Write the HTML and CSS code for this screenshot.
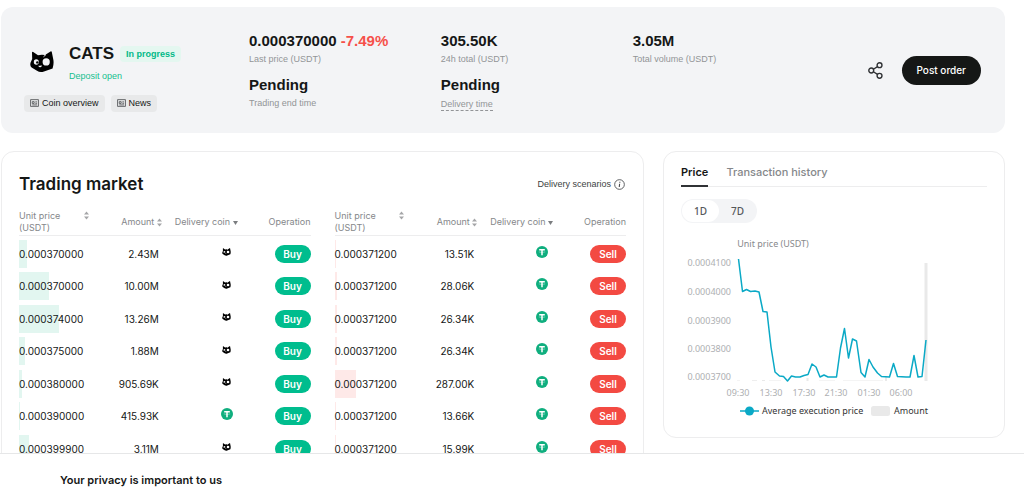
FILE: index.html
```html
<!DOCTYPE html>
<html lang="en">
<head>
<meta charset="utf-8">
<meta name="viewport" content="width=device-width, initial-scale=1">
<title>CATS pre-market trading</title>
<link rel="stylesheet" href="styles.css">
</head>
<body>
<svg class="sprite" aria-hidden="true">
  <symbol id="cat" viewBox="0 0 24 22"><path fill="#000" fill-rule="evenodd" d="M2 1.200Q2.300.4 3.200.9L8 4.200Q11.500 3.200 15 4L20.500.4Q21.600 0 21.800 1L23.400 9Q24 13 22.600 17.500L14 20.500Q10 21.800 7 19.800L1.600 16.600Q-.4 15 .6 11.500L2.200 8ZM16.200 7.300A3.600 3.600 0 1 0 16.200 14.500A3.600 3.600 0 1 0 16.200 7.300ZM6.300 8.300A2.500 2.700 0 1 0 6.300 13.700A2.500 2.700 0 1 0 6.300 8.300ZM8.300 14.700Q9 16.800 10.900 16.100Q12 15.500 11.500 14.300L10.200 14.800Z"/><circle cx="7.300" cy="11.400" r="1.200"/><path d="M13.500 5.800L16 3.500" stroke="#f3f4f6" stroke-width="1"/></symbol>
  <symbol id="tether" viewBox="0 0 12 12"><circle cx="6" cy="6" r="6" fill="#0fae7e"/><path d="M3.200 3.700H8.800M6 3.700V9.300" stroke="#fff" stroke-width="1.500" fill="none"/><path d="M2.800 5.900Q6 7 9.200 5.900" fill="none" stroke="#fff" stroke-width=".4"/></symbol>
  <symbol id="sort" viewBox="0 0 5 9"><path d="M0 3.500L2.500.5L5 3.500ZM0 5.500L2.500 8.500L5 5.500Z" fill="#a5a6a8"/></symbol>
  <symbol id="caret" viewBox="0 0 5 4"><path d="M0 0H5L2.500 4Z" fill="#7b7d80"/></symbol>
  <symbol id="doc" viewBox="0 0 8 7"><path d="M.5.500H7.500V6.500H.5ZM2 2.300H3.700V3.900H2ZM4.700 2.500H6.300M4.700 3.800H6.300M2 5.200H6.300" fill="none" stroke="#45474a" stroke-width=".7"/></symbol>
</svg>
<div class="page">
  <header class="summary">
    <div class="identity">
      <div class="coin">
        <svg class="coin-logo"><use href="#cat"/></svg>
        <div>
          <div class="coin-row"><h1 class="coin-name">CATS</h1><span class="badge">In progress</span></div>
          <p class="deposit">Deposit open</p>
        </div>
      </div>
      <nav class="links">
        <a class="chip" href="#overview"><svg class="doc"><use href="#doc"/></svg>Coin overview</a>
        <a class="chip" href="#news"><svg class="doc"><use href="#doc"/></svg>News</a>
      </nav>
    </div>
    <dl class="stats">
      <div class="stat"><dd class="value">0.000370000 <span class="down">-7.49%</span></dd><dt class="label">Last price (USDT)</dt></div>
      <div class="stat"><dd class="value">305.50K</dd><dt class="label">24h total (USDT)</dt></div>
      <div class="stat"><dd class="value">3.05M</dd><dt class="label">Total volume (USDT)</dt></div>
      <div class="stat"><dd class="value">Pending</dd><dt class="label">Trading end time</dt></div>
      <div class="stat"><dd class="value">Pending</dd><dt class="label"><span class="hint">Delivery time</span></dt></div>
    </dl>
    <div class="actions">
      <button class="share" type="button" aria-label="Share"><svg class="share-icon" viewBox="0 0 14 16" fill="none" stroke="#303235" stroke-width="1.300"><circle cx="3" cy="8" r="2.300"/><circle cx="10.800" cy="3" r="2.300"/><circle cx="10.800" cy="13" r="2.300"/><path d="M5 6.800L8.900 4.300M5 9.200L8.900 11.700"/></svg></button>
      <button class="post" type="button">Post order</button>
    </div>
  </header>
  <main class="main">
    <section class="card market">
      <div class="market-head">
        <h2 class="market-title">Trading market</h2>
        <button class="scenarios" type="button">Delivery scenarios <svg class="info" viewBox="0 0 10 10" fill="none" stroke="#4a4c50"><circle cx="5" cy="5" r="4.400" stroke-width=".8"/><path d="M5.300 2.500V3.400M5.100 4.300L4.800 7.300" stroke-width="1"/></svg></button>
      </div>
      <div class="books">
        <table class="book">
          <thead><tr>
            <th class="c-price"><div class="price-head"><span>Unit price (USDT)</span><svg class="sort"><use href="#sort"/></svg></div></th>
            <th class="c-amount">Amount <svg class="sort"><use href="#sort"/></svg></th>
            <th class="c-coin">Delivery coin <svg class="caret"><use href="#caret"/></svg></th>
            <th class="c-op">Operation</th>
          </tr></thead>
          <tbody>
            <tr><td><div class="price buy-depth"><i class="bar" style="width:11%"></i><span>0.000370000</span></div></td><td class="amount">2.43M</td><td class="asset"><svg class="cat"><use href="#cat"/></svg></td><td class="op"><button class="trade buy" type="button">Buy</button></td></tr>
            <tr><td><div class="price buy-depth"><i class="bar" style="width:41%"></i><span>0.000370000</span></div></td><td class="amount">10.00M</td><td class="asset"><svg class="cat"><use href="#cat"/></svg></td><td class="op"><button class="trade buy" type="button">Buy</button></td></tr>
            <tr><td><div class="price buy-depth"><i class="bar" style="width:55%"></i><span>0.000374000</span></div></td><td class="amount">13.26M</td><td class="asset"><svg class="cat"><use href="#cat"/></svg></td><td class="op"><button class="trade buy" type="button">Buy</button></td></tr>
            <tr><td><div class="price buy-depth"><i class="bar" style="width:8%"></i><span>0.000375000</span></div></td><td class="amount">1.88M</td><td class="asset"><svg class="cat"><use href="#cat"/></svg></td><td class="op"><button class="trade buy" type="button">Buy</button></td></tr>
            <tr><td><div class="price buy-depth"><i class="bar" style="width:4%"></i><span>0.000380000</span></div></td><td class="amount">905.69K</td><td class="asset"><svg class="cat"><use href="#cat"/></svg></td><td class="op"><button class="trade buy" type="button">Buy</button></td></tr>
            <tr><td><div class="price buy-depth"><i class="bar" style="width:2%"></i><span>0.000390000</span></div></td><td class="amount">415.93K</td><td class="asset"><svg class="tether"><use href="#tether"/></svg></td><td class="op"><button class="trade buy" type="button">Buy</button></td></tr>
            <tr><td><div class="price buy-depth"><i class="bar" style="width:14%"></i><span>0.000399900</span></div></td><td class="amount">3.11M</td><td class="asset"><svg class="cat"><use href="#cat"/></svg></td><td class="op"><button class="trade buy" type="button">Buy</button></td></tr>
          </tbody>
        </table>
        <table class="book">
          <thead><tr>
            <th class="c-price"><div class="price-head"><span>Unit price (USDT)</span><svg class="sort"><use href="#sort"/></svg></div></th>
            <th class="c-amount">Amount <svg class="sort"><use href="#sort"/></svg></th>
            <th class="c-coin">Delivery coin <svg class="caret"><use href="#caret"/></svg></th>
            <th class="c-op">Operation</th>
          </tr></thead>
          <tbody>
            <tr><td><div class="price sell-depth"><i class="bar" style="width:2%"></i><span>0.000371200</span></div></td><td class="amount">13.51K</td><td class="asset"><svg class="tether"><use href="#tether"/></svg></td><td class="op"><button class="trade sell" type="button">Sell</button></td></tr>
            <tr><td><div class="price sell-depth"><i class="bar" style="width:3%"></i><span>0.000371200</span></div></td><td class="amount">28.06K</td><td class="asset"><svg class="tether"><use href="#tether"/></svg></td><td class="op"><button class="trade sell" type="button">Sell</button></td></tr>
            <tr><td><div class="price sell-depth"><i class="bar" style="width:3%"></i><span>0.000371200</span></div></td><td class="amount">26.34K</td><td class="asset"><svg class="tether"><use href="#tether"/></svg></td><td class="op"><button class="trade sell" type="button">Sell</button></td></tr>
            <tr><td><div class="price sell-depth"><i class="bar" style="width:3%"></i><span>0.000371200</span></div></td><td class="amount">26.34K</td><td class="asset"><svg class="tether"><use href="#tether"/></svg></td><td class="op"><button class="trade sell" type="button">Sell</button></td></tr>
            <tr><td><div class="price sell-depth"><i class="bar" style="width:30%"></i><span>0.000371200</span></div></td><td class="amount">287.00K</td><td class="asset"><svg class="tether"><use href="#tether"/></svg></td><td class="op"><button class="trade sell" type="button">Sell</button></td></tr>
            <tr><td><div class="price sell-depth"><i class="bar" style="width:2%"></i><span>0.000371200</span></div></td><td class="amount">13.66K</td><td class="asset"><svg class="tether"><use href="#tether"/></svg></td><td class="op"><button class="trade sell" type="button">Sell</button></td></tr>
            <tr><td><div class="price sell-depth"><i class="bar" style="width:2%"></i><span>0.000371200</span></div></td><td class="amount">15.99K</td><td class="asset"><svg class="tether"><use href="#tether"/></svg></td><td class="op"><button class="trade sell" type="button">Sell</button></td></tr>
          </tbody>
        </table>
      </div>
    </section>
    <section class="card history">
      <div class="tabs" role="tablist">
        <button class="tab tab-on" type="button" role="tab" aria-selected="true">Price</button>
        <button class="tab" type="button" role="tab" aria-selected="false">Transaction history</button>
      </div>
      <div class="range">
        <button class="period period-on" type="button">1D</button>
        <button class="period" type="button">7D</button>
      </div>
      <svg class="chart" viewBox="0 0 306 192" role="img" aria-label="Unit price (USDT)">
        <text class="chart-title" x="92" y="14" text-anchor="middle">Unit price (USDT)</text>
        <g class="axis" text-anchor="end">
          <text x="50" y="33">0.0004100</text><text x="50" y="62">0.0004000</text><text x="50" y="91">0.0003900</text><text x="50" y="119">0.0003800</text><text x="50" y="147">0.0003700</text>
        </g>
        <g class="axis" text-anchor="middle">
          <text x="57" y="163">09:30</text><text x="90" y="163">13:30</text><text x="123" y="163">17:30</text><text x="155" y="163">21:30</text><text x="188" y="163">01:30</text><text x="220" y="163">06:00</text>
        </g>
        <path fill="#e9e9e9" d="M243.500 30H246.500V148H243.500ZM125.500 145H127.500V148H125.500ZM204 144H206V148H204ZM56 147.500H59V148H56ZM71 147.300H76V148H71ZM81 147H84V148H81ZM88 147.500H100V148H88ZM138 147.500H154V148H138ZM162 147.500H202V148H162Z"/>
        <path class="line" d="M57.500 26L61.500 58.500L65.500 56.500L69.500 58.500L74 58L78 59L82 78.500L86 79L90 114L94 139L98.500 143L102.500 143.500L106.500 148L110.500 143L114.500 144L119 144L123 142.500L127 141.500L131 131L135 134L139 144L143 142L147 144L155.500 144L159.500 115L163.500 95.500L167.500 125L171.500 106L175.500 108L180 139.500L184 144L188 126.500L192 134L196.500 140L200.500 143.500L208.500 144L212.500 130.500L216.500 143.500L225 144L229 144L233 122.500L237 144L241 143.500L245 107"/>
        <path class="line" d="M59 178H78"/><circle cx="68.500" cy="178" r="4.500" fill="#0aa9c6"/>
        <text class="legend" x="81" y="181">Average execution price</text>
        <rect x="190" y="173" width="19" height="10" rx="2.500" fill="#e9e9e9"/>
        <text class="legend" x="213" y="181">Amount</text>
      </svg>
    </section>
  </main>
  <aside class="privacy"><h2 class="privacy-title">Your privacy is important to us</h2></aside>
</div>
</body>
</html>
```
FILE: styles.css
```css
* { box-sizing: border-box; }
body { margin: 0; background: #fff; color: #151716; font-family: Inter, "Liberation Sans", sans-serif; font-size: 9px; line-height: 12px; }
h1, h2, p, dl, dd { margin: 0; }
button { margin: 0; padding: 0; border: 0; background: none; color: inherit; font: inherit; cursor: pointer; }
a { color: inherit; text-decoration: none; }
.sprite { display: none; }
.page { height: 100vh; overflow: hidden; padding: 7px 19px 0 1px; }

.summary { display: flex; align-items: center; height: 126px; padding: 0 24px 0 23px; border-radius: 12px; background: #f3f4f6; font-family: "Liberation Sans", sans-serif; }
.identity { flex: 0 0 225px; padding-top: 14px; }
.coin { display: flex; align-items: center; gap: 15px; padding-left: 6px; }
.coin-logo { width: 24px; height: 22px; }
.coin-row { display: flex; align-items: center; gap: 6px; }
.coin-name { font-size: 17px; line-height: 24px; font-weight: 700; }
.badge { padding: 2px 6px; border-radius: 4px; background: #e4f7f0; color: #00b987; font-weight: 700; }
.deposit { margin-top: 4px; color: #16bf90; }
.links { display: flex; gap: 6px; margin-top: 13px; }
.chip { display: flex; align-items: center; gap: 3px; padding: 2px 6px 3px; border-radius: 4px; background: #e8e9ea; }
.doc { width: 9px; height: 8px; }

.stats { flex: 1; display: grid; grid-template-columns: repeat(3, 1fr); row-gap: 10px; padding-top: 1px; }
.value { font-size: 15px; line-height: 20px; font-weight: 700; white-space: nowrap; }
.down { color: #f6504a; }
.stat { display: flex; flex-direction: column; }
.label { margin-top: 2px; color: #929497; }
.hint { display: inline-block; padding-top: 1px; border-bottom: 1px dashed #929497; }
.actions { display: flex; align-items: center; gap: 19px; margin-left: 43px; }
.share-icon { display: block; width: 15px; height: 17px; }
.post { padding: 0 15px; border-radius: 15px; background: #151716; color: #fff; font-family: Inter, sans-serif; font-size: 10px; line-height: 29px; font-weight: 500; }

.main { display: grid; grid-template-columns: 643fr 342fr; align-items: start; gap: 19px; margin-top: 18px; }
.card { border: 1px solid #ededee; border-radius: 13px; }
.market { padding: 21px 17px 24px; }
.market-head { display: flex; align-items: center; justify-content: space-between; padding-right: 1px; }
.market-title { font-size: 17px; line-height: 22px; font-weight: 600; }
.scenarios { display: flex; align-items: center; gap: 3px; color: #3d3f42; font-family: "Liberation Sans", sans-serif; }
.info { width: 11px; height: 11px; }
.books { display: grid; grid-template-columns: 1fr 1fr; gap: 24px; margin-top: 15px; }
.book { width: 100%; table-layout: fixed; border-collapse: collapse; }
.book th { height: 25px; padding: 0; border-bottom: 1px solid #ededee; color: #85878a; font-weight: 400; text-align: right; white-space: nowrap; }
.book td { height: 32px; padding: 0; }
.book tbody tr:nth-child(even) td { height: 33px; }
.book .c-price { width: 25%; text-align: left; white-space: normal; }
.c-amount { width: 24%; }
.c-coin { width: 26%; }
.price-head { display: flex; justify-content: space-between; padding-right: 3px; }
.price-head span { width: 48px; }
.sort { width: 5px; height: 9px; vertical-align: middle; }
.caret { width: 5px; height: 4px; vertical-align: middle; }
.price-head .sort { margin-top: 1px; }
.price { position: relative; height: 28px; font-size: 10px; line-height: 28px; margin-top: 4px; }
.price span { position: relative; }
.bar { position: absolute; top: 0; left: 0; height: 28px; }
.buy-depth .bar { background: #e2f6f0; }
.sell-depth .bar { background: #fee9e8; }
.amount { font-size: 10px; text-align: right; }
.book .amount { padding: 4px 3px 0 0; }
.book .asset { padding: 0 5px 0 0; text-align: right; }
.tether { width: 12px; height: 12px; vertical-align: middle; }
.cat { width: 9px; height: 8px; margin-right: 2px; vertical-align: middle; }
.book .op { padding-top: 4px; text-align: right; }
.trade { width: 36px; border-radius: 9px; color: #fff; font-size: 10px; line-height: 18px; font-weight: 600; }
.buy { background: #00bd8e; }
.sell { background: #f34a42; }

.history { padding: 11px 17px 12px; }
.tabs { display: flex; gap: 18px; border-bottom: 1px solid #ededee; }
.tab { margin-bottom: -1px; padding-bottom: 4px; border-bottom: 2px solid transparent; color: #85878a; font-size: 11px; line-height: 18px; font-weight: 500; }
.tab-on { border-color: #303235; color: #151716; font-weight: 600; }
.range { display: flex; width: max-content; margin-top: 12px; padding: 1px; border-radius: 12px; background: #f3f4f6; }
.period { width: 37px; border-radius: 11px; color: #55575a; font-family: "Noto Sans", sans-serif; font-size: 10px; line-height: 22px; font-weight: 500; }
.period-on { background: #fff; }
.chart { display: block; width: 100%; margin-top: 10px; font-family: "Noto Sans", sans-serif; font-size: 9px; }
.chart-title { fill: #88898c; }
.axis { fill: #aeafb2; }
.legend { fill: #333; }
.line { fill: none; stroke: #0aa9c6; stroke-width: 1.5; stroke-linejoin: round; }

.privacy { position: fixed; right: 0; bottom: 0; left: 0; height: 37px; padding: 17px 60px 0; border-top: 1px solid #e6e7e8; background: #fff; }
.privacy-title { font-size: 11px; line-height: 18px; font-weight: 600; }
```
